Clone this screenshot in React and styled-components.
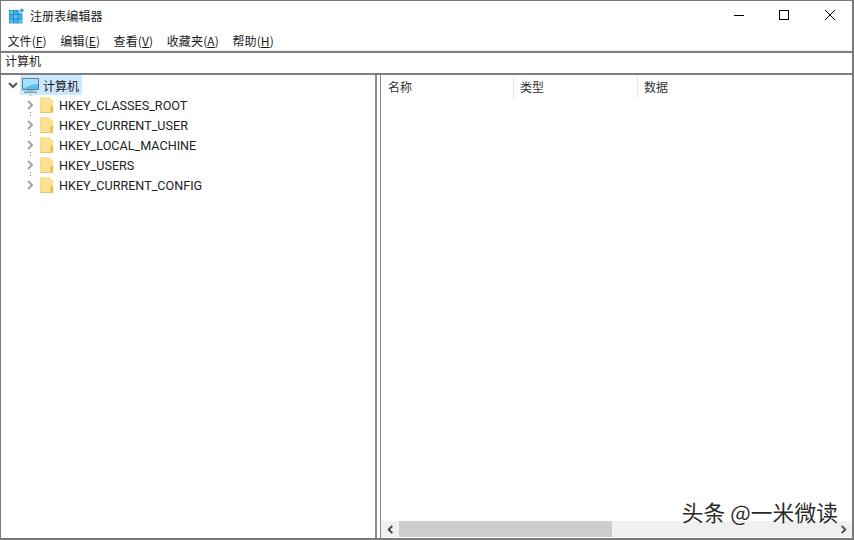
import React from "react";
import styled, { createGlobalStyle } from "styled-components";

const Global = createGlobalStyle`
  html, body { margin: 0; padding: 0; background: #fff; }
  body { font-family: "Liberation Sans", "Noto Sans CJK SC", sans-serif; color: #1a1a1a; }
`;
const Windowed = styled.div`
  width: 854px; height: 540px; box-sizing: border-box;
  border: 1px solid #7a7a7a; border-bottom-width: 2px; border-right-width: 2px;
  display: flex; flex-direction: column; overflow: hidden; position: relative; background: #fff;
`;
const TitleBar = styled.div`
  height: 28px; display: flex; align-items: center; padding-left: 7px; flex: none;
`;
const AppTitle = styled.span`
  font-size: 12px; margin-left: 5px; letter-spacing: 0.1px;
  font-family: "Noto Sans CJK SC", sans-serif;
`;
const WinButtons = styled.div`
  margin-left: auto; display: flex; margin-right: -1px;
`;
const WinButton = styled.div`
  width: ${p => p.$w || 46}px; height: 28px; display: flex; align-items: center; justify-content: center;
`;
const MenuBar = styled.div`
  height: 22px; box-sizing: border-box; display: flex; flex: none; padding: 1px 0 0 6.4px; gap: 13.5px; align-items: center;
  border-bottom: 1px solid #f0f0f0;
`;
const MenuItem = styled.span`
  font-size: 12px; letter-spacing: 0.12px; font-family: "Noto Sans CJK SC", sans-serif;
  u { text-decoration: underline; text-underline-offset: 1px; }
`;
const AddressBar = styled.div`
  flex: none; border-top: 2px solid #7f7f7f; border-bottom: 2px solid #7f7f7f;
  display: flex; align-items: center; padding: 0 0 5px 4px; height: 15px; font-size: 12px;
  font-family: "Noto Sans CJK SC", sans-serif;
`;
const Panes = styled.div`
  flex: 1; display: flex; min-height: 0;
`;
const TreePane = styled.div`
  width: 368px; flex: none; border-right: 2px solid #8a8a8a; padding: 0 0 0 6px;
`;
const Splitter = styled.div`
  width: 3px; flex: none;
`;
const ListPane = styled.div`
  flex: 1; border-left: 1px solid #8a8a8a; display: flex; flex-direction: column; min-width: 0;
`;
const TreeRoot = styled.div`
  display: flex; align-items: center; height: 20px; padding-left: 1px;
`;
const Selected = styled.span`
  display: flex; align-items: center; height: 20px; background: #cce8ff; padding: 0 3px 0 2px; margin-left: 2px;
`;
const RootLabel = styled.span`
  font-size: 12px; margin-left: 4px; font-family: "Noto Sans CJK SC", sans-serif;
`;
const TreeRow = styled.div`
  display: flex; align-items: center; height: 20px; padding-left: 18px; position: relative;
`;
const ChevronGap = styled.span`
  width: 5px; flex: none;
`;
const Dots = styled.i`
  position: absolute; left: 23px; top: -3px; width: 1px; height: 6px;
  background: repeating-linear-gradient(#888 0 1px, transparent 1px 3px);
`;
const KeyLabel = styled.span`
  font-size: 12.6px; margin-left: 5px; font-family: Roboto, "Liberation Sans", sans-serif; color: #222;
`;
const Header = styled.div`
  height: 23px; display: flex; flex: none; box-sizing: border-box;
`;
const HeaderCell = styled.div`
  width: ${p => p.$w}px; flex: none; box-sizing: border-box; padding-left: ${p => p.$pad || 6}px;
  border-right: 1px solid #e5e5e5; font-size: 12px; display: flex; align-items: center;
  color: #333; font-family: "Noto Sans CJK SC", sans-serif;
  &:last-child { border-right: none; }
`;
const ListBody = styled.div` flex: 1; `;
const ScrollBar = styled.div`
  height: 16px; flex: none; background: #f0f0f0; display: flex; align-items: center; margin-bottom: 1px;
`;
const ScrollArrow = styled.div`
  width: 18px; height: 16px; flex: none; display: flex; align-items: center; justify-content: center;
`;
const ScrollThumb = styled.div`
  width: 213px; height: 16px; background: #cdcdcd; flex: none;
`;
const ScrollTrack = styled.div` flex: 1; `;
const Watermark = styled.div`
  position: absolute; right: 14px; bottom: 11px; font-size: 21.7px; color: #2a2a2a;
  font-family: "Noto Sans CJK SC", sans-serif; letter-spacing: 0.1px; white-space: nowrap;
  text-shadow: 0 0 2px #fff, 0 0 2px #fff;
`;

const RegIcon = () => (
  <svg width="17" height="18" viewBox="0 0 17 18">
    <rect x="1" y="4" width="13.4" height="13.4" fill="#2284bd" />
    {[0, 1, 2].flatMap(r => [0, 1, 2].map(c => (
      <rect key={`${r}${c}`} x={1.5 + c * 4.4} y={4.5 + r * 4.4} width="3.6" height="3.6"
        fill={(r + c) % 2 ? "#3cb4ea" : "#5cc6f2"} />
    )))}
    <path d="M10.5 4.5 L13.8 1.2 L17 4.5 L13.8 7.8Z" fill="#fff" />
    <path d="M11.5 4.5 L13.8 2.2 L16 4.5 L13.8 6.8Z" fill="#3a9bd2" />
  </svg>
);
const Monitor = () => (
  <svg width="17" height="17" viewBox="0 0 17 17">
    <rect x="0.5" y="1.5" width="16" height="11" fill="#58bff0" stroke="#5d7f95" />
    <path d="M1 2h15v5C10 7 6 9 1 12z" fill="#a4e2fb" />
    <rect x="5" y="13" width="7" height="1" fill="#a9bbc6" />
    <rect x="2" y="14.5" width="13" height="1.2" fill="#6f8ea2" />
  </svg>
);
const Folder = () => (
  <svg width="14" height="16" viewBox="0 0 14 16">
    <path d="M0 0.5 H9.5 L13 4 V16 H0 Z" fill="#fde291" />
    <path d="M0.5 1 H9 L12.5 4.5 V15.5 H0.5 Z" fill="none" stroke="#f5d98a" />
    <path d="M10.5 9 H13 V16 H10.5Z" fill="#e9bb50" />
    <path d="M0 15 H13 V16 H0Z" fill="#e8c468" />
  </svg>
);
const Chevron = ({ dir, color = "#a3a3a3", size = 10, w = 2 }) => (
  <svg width={size} height={size} viewBox="0 0 10 10" fill="none" stroke={color} strokeWidth={w}>
    {dir === "right" && <path d="M3 1 L7 5 L3 9" />}
    {dir === "down" && <path d="M1 3 L5 7 L9 3" />}
    {dir === "left" && <path d="M7 1 L3 5 L7 9" />}
  </svg>
);

const keys = ["HKEY_CLASSES_ROOT", "HKEY_CURRENT_USER", "HKEY_LOCAL_MACHINE", "HKEY_USERS", "HKEY_CURRENT_CONFIG"];
const menus = [["文件", "F"], ["编辑", "E"], ["查看", "V"], ["收藏夹", "A"], ["帮助", "H"]];

export default function App() {
  return (
    <Windowed>
      <Global />
      <TitleBar>
        <RegIcon />
        <AppTitle>注册表编辑器</AppTitle>
        <WinButtons>
          <WinButton $w={45}>
            <svg width="10" height="10"><path d="M0 5.5H10" stroke="#000" /></svg>
          </WinButton>
          <WinButton>
            <svg width="10" height="10"><rect x="0.5" y="0.5" width="9" height="9" fill="none" stroke="#000" /></svg>
          </WinButton>
          <WinButton>
            <svg width="10" height="10"><path d="M0 0L10 10M10 0L0 10" stroke="#000" /></svg>
          </WinButton>
        </WinButtons>
      </TitleBar>
      <MenuBar>
        {menus.map(([t, k]) => <MenuItem key={k}>{t}(<u>{k}</u>)</MenuItem>)}
      </MenuBar>
      <AddressBar>计算机</AddressBar>
      <Panes>
        <TreePane>
          <TreeRoot>
            <Chevron dir="down" color="#555" />
            <Selected>
              <Monitor />
              <RootLabel>计算机</RootLabel>
            </Selected>
          </TreeRoot>
          {keys.map(k => (
            <TreeRow key={k}>
              <Dots />
              <Chevron dir="right" />
              <ChevronGap />
              <Folder />
              <KeyLabel>{k}</KeyLabel>
            </TreeRow>
          ))}
        </TreePane>
        <Splitter />
        <ListPane>
          <Header>
            <HeaderCell $w={133} $pad={7}>名称</HeaderCell>
            <HeaderCell $w={124}>类型</HeaderCell>
            <HeaderCell $w={200}>数据</HeaderCell>
          </Header>
          <ListBody />
          <ScrollBar>
            <ScrollArrow><Chevron dir="left" color="#444" size={9} w={2.2} /></ScrollArrow>
            <ScrollThumb />
            <ScrollTrack />
            <ScrollArrow><Chevron dir="right" color="#555" size={9} w={2.2} /></ScrollArrow>
          </ScrollBar>
        </ListPane>
      </Panes>
      <Watermark>头条 @一米微读</Watermark>
    </Windowed>
  );
}
